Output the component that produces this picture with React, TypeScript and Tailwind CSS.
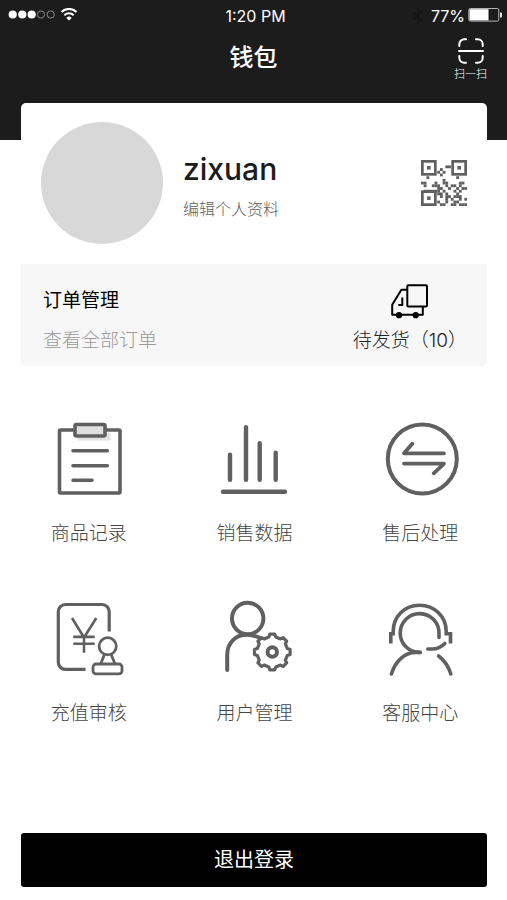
import type { ReactNode } from "react";

interface MenuItem {
  label: string;
  icon: ReactNode;
}

const QR_ROWS = [
  ".................",
  ".................",
  ".........##......",
  ".......#.........",
  "......#.#........",
  ".......#.........",
  "..#..........#...",
  "........#........",
  "##...#..##....##.",
  ".#..###..#.##.#..",
  "......##..#..#.##",
  ".######.#...#.#..",
  "......##.#...#...",
  ".......#.##.###..",
  ".........#.#..#.#",
  "......#..#..##...",
  ".......##..##.###",
];

const gearPath = () => {
  const points: string[] = [];
  for (let i = 0; i < 8; i++) {
    const steps = [
      [-13, 15.4],
      [-8, 18],
      [8, 18],
      [13, 15.4],
    ];
    steps.forEach(([offset, radius]) => {
      const angle = ((i * 45 + offset) * Math.PI) / 180;
      points.push(`${(58.3 + radius * Math.cos(angle)).toFixed(2)} ${(53 + radius * Math.sin(angle)).toFixed(2)}`);
    });
  }
  return `M${points.join("L")}Z`;
};

function StatusBar() {
  return (
    <div className="flex h-8 items-center justify-between pl-2 pr-1 text-white">
      <div className="flex flex-1 items-center gap-1">
        <svg width="48" height="12" viewBox="0 0 48 12" aria-hidden="true">
          <circle cx="4.7" cy="4.5" r="4.1" fill="white" />
          <circle cx="14.3" cy="4.5" r="4.1" fill="white" />
          <circle cx="23.7" cy="4.5" r="4.1" fill="white" />
          <circle cx="33" cy="4.5" r="3.6" fill="none" stroke="#8a8a8a" />
          <circle cx="42.7" cy="4.5" r="3.6" fill="none" stroke="#8a8a8a" />
        </svg>
        <svg width="18" height="16" viewBox="0 0 18 16" fill="none" stroke="white" strokeWidth="2" aria-hidden="true">
          <path d="M1.5 4A10.6 10.6 0 0 1 16.5 4" />
          <path d="M4.3 7.3A6.6 6.6 0 0 1 13.7 7.3" />
          <path d="M9 12.6L6.3 9.9A3.8 3.8 0 0 1 11.7 9.9Z" fill="white" stroke="none" />
        </svg>
      </div>
      <span className="text-base">1:20 PM</span>
      <div className="flex flex-1 items-center justify-end gap-[3px]">
        <svg className="mr-1" width="12" height="16" viewBox="0 0 12 16" fill="none" stroke="#141414" strokeWidth="1.5" aria-hidden="true">
          <path d="M2 4.5L10 11.5L6 15V1L10 4.5L2 11.5" />
        </svg>
        <span className="text-base">77%</span>
        <svg width="35" height="16" viewBox="0 0 35 16" aria-hidden="true">
          <rect x="0.8" y="0.5" width="30" height="12.6" rx="1.5" fill="none" stroke="#b5b5b5" />
          <rect x="1.5" y="1.2" width="19" height="11.2" fill="white" />
          <path d="M32 4.4h1a1 1 0 0 1 1 1v3a1 1 0 0 1-1 1h-1z" fill="#e5e5e5" />
        </svg>
      </div>
    </div>
  );
}

function ScanIcon() {
  return (
    <svg width="26" height="26" viewBox="0 0 26 26" fill="none" stroke="white" strokeWidth="2" strokeLinecap="round" aria-hidden="true">
      <path d="M1.3 8V6.3a5 5 0 0 1 5-5H8M18 1.3h1.7a5 5 0 0 1 5 5V8M24.7 18v1.7a5 5 0 0 1-5 5H18M8 24.7H6.3a5 5 0 0 1-5-5V18" />
      <path d="M1 13h24" />
    </svg>
  );
}

function QrIcon() {
  return (
    <svg width="46" height="46" viewBox="0 0 17 17" fill="#606060" aria-hidden="true">
      {QR_ROWS.map((row, y) =>
        row.split("").map((cell, x) =>
          cell === "#" ? <rect key={`${x}-${y}`} x={x} y={y} width="1.05" height="1.05" /> : null
        )
      )}
      {[
        [0, 0],
        [11.2, 0],
        [0, 11.2],
      ].map(([x, y]) => (
        <g key={`${x}-${y}`}>
          <rect x={x + 0.5} y={y + 0.5} width="4.8" height="4.8" fill="white" stroke="#606060" />
          <rect x={x + 2.25} y={y + 2.25} width="1.3" height="1.3" />
        </g>
      ))}
    </svg>
  );
}

function TruckIcon() {
  return (
    <svg width="40" height="36" viewBox="0 0 40 36" fill="none" stroke="black" strokeWidth="2" strokeLinejoin="round" aria-hidden="true">
      <rect x="17.3" y="2.3" width="19.7" height="21.2" rx="1" />
      <path d="M17 6.8H11.4L2.2 21.8V31.8H32.8V24" />
      <path d="M12.3 14.5V22H8.3" />
      <circle cx="9" cy="32.2" r="3.1" fill="black" stroke="none" />
      <circle cx="25.7" cy="32.2" r="3.1" fill="black" stroke="none" />
    </svg>
  );
}

function MenuIcon({ children }: { children: ReactNode }) {
  return (
    <svg
      className="size-20"
      viewBox="0 0 80 80"
      fill="none"
      stroke="#606060"
      strokeWidth="3.6"
      strokeLinecap="round"
      strokeLinejoin="round"
      aria-hidden="true"
    >
      {children}
    </svg>
  );
}

const menuItems: MenuItem[] = [
  {
    label: "商品记录",
    icon: (
      <MenuIcon>
        <rect x="28.5" y="13.5" width="33" height="8" fill="#e2e2e2" stroke="none" />
        <path d="M26 11H11.5a1 1 0 0 0-1 1V73a1 1 0 0 0 1 1H70a1 1 0 0 0 1-1V12a1 1 0 0 0-1-1H56" />
        <rect x="26" y="5.5" width="30" height="11.5" rx="1.5" fill="#dedede" />
        <path d="M24 31.7H58.3M24 46.7H58.3M24 61.3H43" />
      </MenuIcon>
    ),
  },
  {
    label: "销售数据",
    icon: (
      <MenuIcon>
        <path strokeWidth="4.4" d="M16 35.8V60.8M32 8.2V60.8M45.7 24.2V60.8M61.7 33.7V60.8M9 72.7H71" />
      </MenuIcon>
    ),
  },
  {
    label: "售后处理",
    icon: (
      <MenuIcon>
        <circle cx="42.3" cy="40" r="34.5" strokeWidth="4" />
        <path strokeWidth="3.8" d="M64 34.3H24L32.3 24.8M24 44.6H64L53.7 54.3" />
      </MenuIcon>
    ),
  },
  {
    label: "充值审核",
    icon: (
      <MenuIcon>
        <path strokeWidth="3.2" strokeLinecap="butt" d="M60.2 32.5V12.5a7 7 0 0 0-7-7H16.3a7 7 0 0 0-7 7V63.3a7 7 0 0 0 7 7H36.5" />
        <path strokeWidth="2.6" strokeLinecap="butt" strokeLinejoin="miter" d="M23 19L35 38.5L47.3 19M35 38V53.7M24.3 37.9H45.7M24.3 44.7H45.7" />
        <circle cx="58.7" cy="47.3" r="8.6" strokeWidth="2.8" />
        <path strokeWidth="2.8" d="M55.3 56L52 64M62.3 56L65.7 64" />
        <rect x="44" y="65" width="29" height="9.8" rx="3" strokeWidth="2.8" />
      </MenuIcon>
    ),
  },
  {
    label: "用户管理",
    icon: (
      <MenuIcon>
        <circle cx="33.7" cy="19.5" r="15.7" strokeWidth="4" />
        <path strokeWidth="4" d="M13.2 71V56C13.2 44 21.5 35.8 32.5 35.8C38 35.8 42.5 37 47 39.5" />
        <path strokeWidth="3.2" fill="white" d={gearPath()} />
        <circle cx="58.3" cy="53" r="4.7" strokeWidth="4" />
      </MenuIcon>
    ),
  },
  {
    label: "客服中心",
    icon: (
      <MenuIcon>
        <path strokeLinecap="butt" strokeLinejoin="miter" d="M10.8 44.5V34.8H13.2V32.5C13.2 17.5 24.5 6.2 39.5 6.2S66.2 17.5 66.2 32.5V34.8H70.5V44.5" />
        <path d="M59 38.5V34.5A19.4 19.4 0 1 0 39.8 53.4" />
        <path d="M11.4 75C15 63.5 23.5 53.4 36 53.4H40.3" />
        <path d="M47.8 50H52C57.5 50 61.5 48 64.8 44.5" />
        <path d="M58.6 57C64.5 61.5 68.7 68 70.8 75" />
      </MenuIcon>
    ),
  },
];

export default function App() {
  return (
    <div className="flex min-h-screen flex-col bg-white font-['Inter','Noto_Sans_CJK_SC',sans-serif]">
      <header className="bg-[#1c1c1c] pb-9 text-white">
        <StatusBar />
        <div className="grid grid-cols-[1fr_auto_1fr] items-start px-5">
          <h1 className="col-start-2 pt-2 text-2xl leading-9 font-medium">钱包</h1>
          <button type="button" className="flex h-[72px] flex-col items-center gap-0.5 justify-self-end pt-1.5 text-[11px] leading-4 font-light">
            <ScanIcon />
            扫一扫
          </button>
        </div>
      </header>

      <section className="mr-5 ml-[21px] -mt-[37px] overflow-hidden rounded-[5px] bg-white">
        <div className="flex items-center gap-5 px-5 pt-[19px] pb-5">
          <div className="size-[122px] rounded-full bg-[#d8d8d8]" />
          <div className="flex flex-1 flex-col items-start pt-2">
            <h2 className="text-[30px] leading-10 font-medium text-[#1c1c1c]">zixuan</h2>
            <a href="#profile" className="mt-1 text-base leading-8 font-light text-[#606060]">
              编辑个人资料
            </a>
          </div>
          <button type="button" aria-label="二维码">
            <QrIcon />
          </button>
        </div>
        <div className="flex items-center justify-between bg-[#f7f7f7] pt-[17px] pr-5 pb-[5px] pl-[22px]">
          <div className="flex flex-col">
            <h3 className="text-[19px] leading-10 text-black">订单管理</h3>
            <a href="#orders" className="text-[19px] leading-10 font-light text-[#999999]">
              查看全部订单
            </a>
          </div>
          <button type="button" className="flex flex-col items-center text-[19px] leading-10 font-light text-[#222222]">
            <span className="flex h-10 items-center">
              <TruckIcon />
            </span>
            <span>待发货（10）</span>
          </button>
        </div>
      </section>

      <nav className="mt-[53px] grid grid-cols-3 gap-y-[47px] pr-1 pl-1.5">
        {menuItems.map((item) => (
          <button key={item.label} type="button" className="flex flex-col items-center gap-[17px] text-[19px] font-light text-[#444444]">
            {item.icon}
            <span className="leading-9">{item.label}</span>
          </button>
        ))}
      </nav>

      <footer className="mt-auto pt-8 pr-5 pb-[13px] pl-[21px]">
        <button type="button" className="h-[54px] w-full rounded-[3px] bg-black text-xl text-white">
          退出登录
        </button>
      </footer>
    </div>
  );
}
